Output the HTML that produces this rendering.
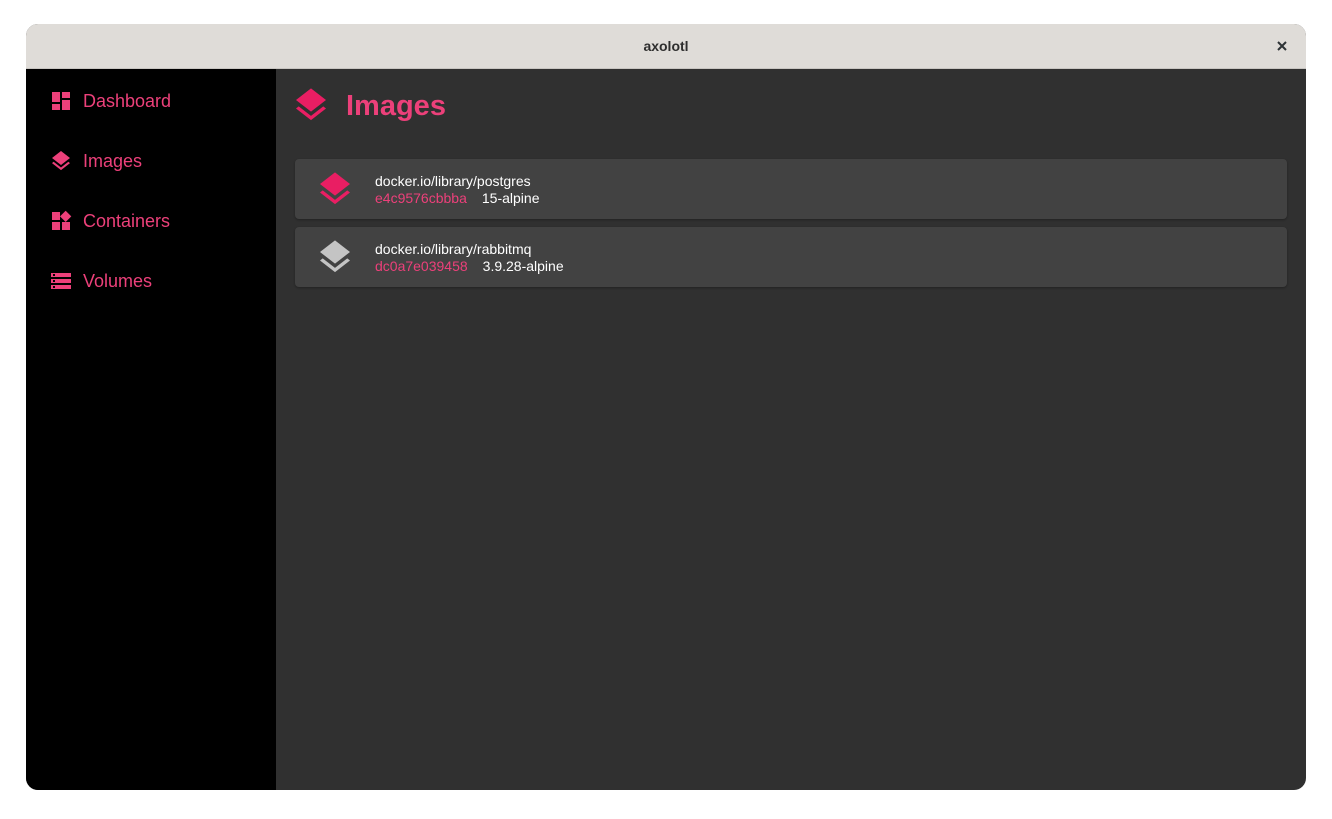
<!DOCTYPE html>
<html><head><meta charset="utf-8"><style>
*{margin:0;padding:0;box-sizing:border-box}
body{width:1332px;height:819px;background:#fff;position:relative;overflow:hidden;font-family:"Liberation Sans","DejaVu Sans",sans-serif}
.win{position:absolute;left:26px;top:24px;width:1280px;height:766px;border-radius:12px;overflow:hidden;background:#303030}
.title{position:absolute;left:0;top:0;width:1280px;height:45px;background:#dfdcd8;border-bottom:1px solid #c8c5c1;text-align:center;line-height:44px;font-size:14px;font-weight:bold;color:#2e2e2e}
.close{position:absolute;right:17px;top:15px;width:14px;height:14px}
.side{position:absolute;left:0;top:45px;width:250px;height:721px;background:#000}
.nav{position:absolute;left:23px;height:24px;display:flex;align-items:center;color:#ec407a;font-size:18px}
.nav svg{width:24px;height:24px;fill:#ec407a;margin-right:10px}
.h{position:absolute;left:265px;top:61px;width:40px;height:40px;fill:#e91e63}
.ht{position:absolute;left:320px;top:66px;font-size:29px;font-weight:bold;color:#ec407a}
.card{position:absolute;left:269px;width:992px;height:60px;background:#424242;border-radius:4px;box-shadow:0 1px 2px rgba(0,0,0,.3)}
.card svg{position:absolute;left:20px;top:10px;width:40px;height:40px}
.n{position:absolute;left:80px;top:14px;font-size:14px;color:#fff}
.s{position:absolute;left:80px;top:31px;font-size:14px;color:#ec407a}
.s b{color:#fff;font-weight:normal;margin-left:15px}
</style></head><body>
<div class="win">
<div class="title">axolotl
<svg class="close" viewBox="0 0 14 14"><path d="M3 3L11 11M11 3L3 11" stroke="#2e3436" stroke-width="2"/></svg></div>
<div class="side">
<div class="nav" style="top:20px"><svg viewBox="0 0 24 24"><path d="M3 13h8V3H3v10zm0 8h8v-6H3v6zm10 0h8V11h-8v10zm0-18v6h8V3h-8z"/></svg>Dashboard</div>
<div class="nav" style="top:80px"><svg viewBox="0 0 24 24"><path d="M11.99 18.54l-7.37-5.73L3 14.07l9 7 9-7-1.63-1.27-7.38 5.74zM12 16l7.36-5.73L21 9l-9-7-9 7 1.63 1.27L12 16z"/></svg>Images</div>
<div class="nav" style="top:140px"><svg viewBox="0 0 24 24"><path d="M13 13v8h8v-8h-8zM3 21h8v-8H3v8zM3 3v8h8V3H3zm13.66-1.31L11 7.34 16.66 13l5.66-5.66-5.66-5.650z"/></svg>Containers</div>
<div class="nav" style="top:200px"><svg viewBox="0 0 24 24"><path d="M2 20h20v-4H2v4zm2-3h2v2H4v-2zM2 4v4h20V4H2zm4 3H4V5h2v2zm-4 7h20v-4H2v4zm2-3h2v2H4v-2z"/></svg>Volumes</div>
</div>
<svg class="h" viewBox="0 0 24 24"><path d="M11.99 18.54l-7.37-5.73L3 14.07l9 7 9-7-1.63-1.27-7.38 5.74zM12 16l7.36-5.73L21 9l-9-7-9 7 1.63 1.27L12 16z"/></svg>
<div class="ht">Images</div>
<div class="card" style="top:135px"><svg viewBox="0 0 24 24" fill="#e91e63"><path d="M11.99 18.54l-7.37-5.73L3 14.07l9 7 9-7-1.63-1.27-7.38 5.74zM12 16l7.36-5.73L21 9l-9-7-9 7 1.63 1.27L12 16z"/></svg>
<div class="n">docker.io/library/postgres</div><div class="s">e4c9576cbbba<b>15-alpine</b></div></div>
<div class="card" style="top:203px"><svg viewBox="0 0 24 24" fill="#c4c4c4"><path d="M11.99 18.54l-7.37-5.73L3 14.07l9 7 9-7-1.63-1.27-7.38 5.74zM12 16l7.36-5.73L21 9l-9-7-9 7 1.63 1.27L12 16z"/></svg>
<div class="n">docker.io/library/rabbitmq</div><div class="s">dc0a7e039458<b>3.9.28-alpine</b></div></div>
</div>
</body></html>
